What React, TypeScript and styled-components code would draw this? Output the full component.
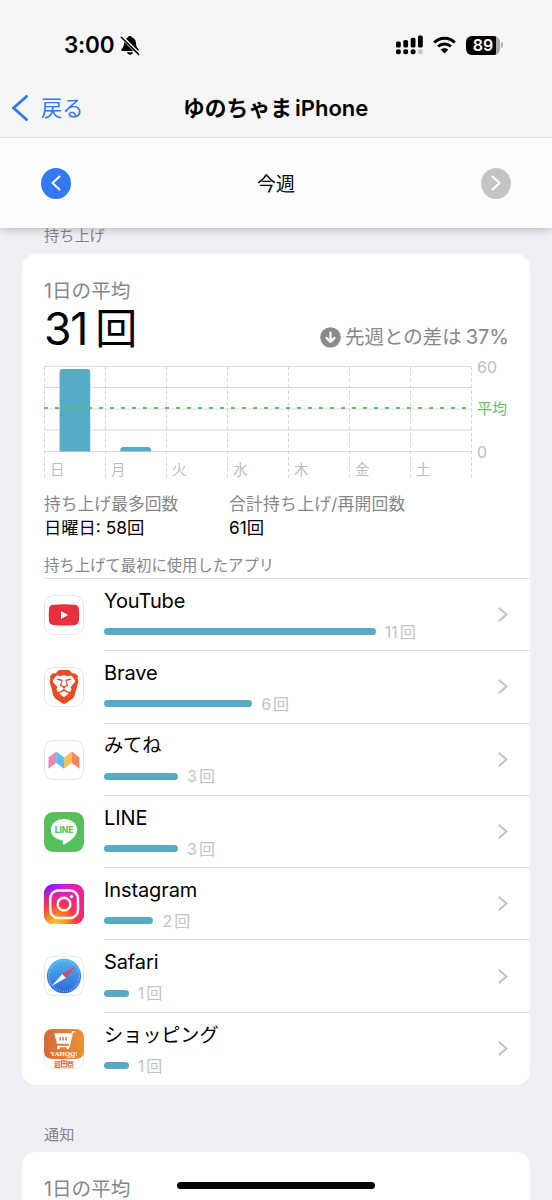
import React from 'react';
import styled, { createGlobalStyle } from 'styled-components';
import { SiBrave } from 'react-icons/si';

const FONT = "Inter, 'Noto Sans CJK JP', sans-serif";
const TEAL = '#58abc4';
const DAY_W = 61;

const Global = createGlobalStyle`
  *, *::before, *::after { box-sizing: border-box; }
  html, body { margin: 0; padding: 0; overflow: hidden; background: #f0eff5; }
  body { font-family: ${FONT}; color: #000; font-weight: 400; -webkit-font-smoothing: antialiased; }
`;

const Screen = styled.div`
  width: 552px;
  height: 1200px;
  overflow: hidden;
  position: relative;
  background: #f0eff5;
`;

const Header = styled.header`
  height: 138px;
  background: #f6f6f7;
  border-bottom: 1px solid #dddde0;
`;

const StatusBar = styled.div`
  height: 79px;
  padding: 11px 49px 0 64px;
  display: flex;
  align-items: center;
`;

const Clock = styled.span`
  font-size: 22.5px;
  font-weight: 600;
  line-height: 28px;
  letter-spacing: -0.2px;
  width: 56px;
  white-space: nowrap;
`;

const StatusIcons = styled.div`
  margin-left: auto;
  display: flex;
  align-items: center;
  gap: 10px;
`;

const Battery = styled.div`
  width: 37px;
  height: 20px;
  display: flex;
  align-items: center;
`;

const BatteryBody = styled.div`
  width: 34px;
  height: 19px;
  border-radius: 6px;
  background: linear-gradient(90deg, #000 30px, #a9a9ab 30px);
  color: #fff;
  font-size: 16px;
  font-weight: 600;
  line-height: 19px;
  text-align: center;
`;

const BatteryTip = styled.div`
  width: 2px;
  height: 6px;
  margin-left: 1px;
  border-radius: 0 2px 2px 0;
  background: #b4b4b6;
`;

const NavBar = styled.nav`
  height: 58px;
  display: grid;
  grid-template-columns: 183px 186px 1fr;
  align-items: center;
`;

const Back = styled.a`
  display: flex;
  align-items: center;
  gap: 13px;
  padding-left: 12px;
  color: #3478f6;
  font-size: 21.2px;
  line-height: 28px;
`;

const Title = styled.h1`
  margin: 0;
  font-size: 22px;
  font-weight: 600;
  line-height: 28px;
  white-space: nowrap;
  display: flex;
  gap: 3px;
`;

const Kana = styled.span<{ $size: number; $track?: number }>`
  font-size: ${p => p.$size}px;
  letter-spacing: ${p => p.$track ?? 0}px;
`;

const WeekBar = styled.div`
  height: 90px;
  padding: 0 41px;
  display: flex;
  align-items: center;
  justify-content: space-between;
  background: #fdfdfe;
  position: relative;
  z-index: 1;
  box-shadow: 0 1px 9px rgba(0, 0, 0, 0.25);
  clip-path: inset(0 0 -16px 0);
`;

const WeekButton = styled.button<{ $muted?: boolean }>`
  width: 30px;
  height: 31px;
  padding: 0;
  border: 0;
  border-radius: 50%;
  display: grid;
  place-items: center;
  background: ${p => (p.$muted ? '#c4c4c6' : '#3478f6')};
`;

const WeekLabel = styled.span`
  padding-top: 4px;
  font-size: 19px;
  line-height: 28px;
`;

const SectionLabel = styled.h2<{ $top: number; $bottom: number }>`
  margin: 0;
  padding: ${p => p.$top}px 44px ${p => p.$bottom}px;
  font-size: 15.2px;
  font-weight: 400;
  line-height: 20px;
  color: #85858a;
`;

const ScrollArea = styled.main`
  margin-top: -2px;
`;

const Card = styled.section<{ $height: number }>`
  margin: 0 22px;
  height: ${p => p.$height}px;
  border-radius: 14px;
  background: #fff;
  overflow: hidden;
`;

const Caption = styled.div`
  padding: 24px 0 0 22px;
  font-size: 19.6px;
  line-height: 26px;
  color: #87878b;
`;

const Summary = styled.div`
  height: 58px;
  padding: 0 21px 0 22px;
  display: flex;
  justify-content: space-between;
`;

const BigValue = styled.div`
  display: flex;
  gap: 8px;
  font-size: 44.5px;
  line-height: 50px;
  letter-spacing: -1.2px;
`;

const Trend = styled.div`
  display: flex;
  align-items: center;
  gap: 4px;
  height: 28px;
  margin-top: 19px;
  font-size: 20px;
  line-height: 28px;
  color: #87878b;
`;

const ChartSvg = styled.svg`
  display: block;
  margin-left: 22px;
  overflow: visible;
`;

const Stats = styled.dl`
  margin: 0;
  padding: 11px 0 0 22px;
  height: 72px;
  display: grid;
  grid-template-columns: 185px 1fr;
  grid-template-rows: 24px 24px;
`;

const StatName = styled.dt<{ $track?: number }>`
  grid-row: 1;
  font-size: 16.8px;
  line-height: 24px;
  letter-spacing: ${p => p.$track ?? 0}px;
  color: #87878b;
  white-space: nowrap;
`;

const StatValue = styled.dd`
  grid-row: 2;
  margin: 0;
  font-size: 17.3px;
  line-height: 24px;
  white-space: nowrap;
`;

const ListLabel = styled.div`
  margin-left: 22px;
  height: 26px;
  padding-top: 3px;
  font-size: 15.35px;
  line-height: 20px;
  color: #87878b;
  border-bottom: 1px solid #e1e1e4;
`;

const AppList = styled.ul`
  margin: 0;
  padding: 0 0 0 22px;
  list-style: none;
`;

const AppRow = styled.li`
  height: 72.3px;
  display: grid;
  grid-template-columns: 60px 1fr;
`;

const IconCell = styled.div`
  padding-top: 16px;
`;

const RowBody = styled.div`
  display: flex;
  align-items: center;
  justify-content: space-between;
  padding-right: 22px;
  border-bottom: 1px solid #e1e1e4;
  ${AppRow}:last-child & { border-bottom: 0; }
`;

const AppName = styled.div<{ $kana?: boolean }>`
  font-size: ${p => (p.$kana ? 19.2 : 20)}px;
  line-height: 26px;
  height: 34px;
  letter-spacing: -0.1px;
`;

const Usage = styled.div`
  display: flex;
  align-items: center;
  gap: 9px;
  height: 20px;
  font-size: 16px;
  line-height: 20px;
  color: #c3c3c6;
`;

const UsageBar = styled.div`
  height: 7px;
  border-radius: 4px;
  background: ${TEAL};
`;

const Count = styled.span`
  display: flex;
  gap: 2px;
`;

const HomeIndicator = styled.div`
  position: absolute;
  left: 177px;
  top: 1182px;
  width: 198px;
  height: 7px;
  border-radius: 4px;
  background: #000;
`;

const Chevron = ({ w, h, color, stroke, left }: { w: number; h: number; color: string; stroke: number; left?: boolean }) => (
  <svg width={w} height={h} viewBox={`0 0 ${w} ${h}`} fill="none" stroke={color} strokeWidth={stroke} strokeLinecap="round" strokeLinejoin="round">
    <path d={left ? `M${w - 1.5} 1.5L1.5 ${h / 2}L${w - 1.5} ${h - 1.5}` : `M1.5 1.5L${w - 1.5} ${h / 2}L1.5 ${h - 1.5}`} />
  </svg>
);

const BellOff = () => (
  <svg width="20" height="21" viewBox="0 0 20 21">
    <path d="M10 1C8.700 1 8 1.700 7.800 2.600C5.200 3.500 4.100 5.700 4 8.500C3.900 11.400 3.100 12.500 1.600 14C.8 14.900 1.200 16 2.300 16H17.700C18.800 16 19.200 14.900 18.400 14C16.900 12.500 16.100 11.400 16 8.500C15.900 5.700 14.800 3.500 12.200 2.600C12 1.700 11.300 1 10 1Z" />
    <path d="M7 17.300H13C12.700 18.900 11.500 19.700 10 19.700S7.300 18.900 7 17.300Z" />
    <path d="M1.600 1.800L19 19.200" stroke="#f6f6f7" strokeWidth="3.600" />
    <path d="M1.300 2.300L18.600 19.400" stroke="#000" strokeWidth="1.500" strokeLinecap="round" />
  </svg>
);

const Signal = () => (
  <svg width="27" height="20" viewBox="0 0 27 20">
    <rect x="0" y="6.500" width="4.800" height="6" rx="1.600" />
    <rect x="7.300" y="5" width="4.800" height="7.500" rx="1.600" />
    <rect x="14.700" y="2.800" width="4.800" height="9.700" rx="1.600" />
    <rect x="22" y="0.500" width="4.800" height="12" rx="1.600" />
    <rect x="0" y="14.300" width="4.800" height="5" rx="1.800" />
    <rect x="7.300" y="14.300" width="4.800" height="5" rx="1.800" />
    <rect x="14.700" y="14.300" width="4.800" height="5" rx="1.800" />
    <rect x="22" y="14.300" width="4.800" height="5" rx="1.800" fill="#c6c6c8" />
  </svg>
);

const Wifi = () => (
  <svg width="23" height="18" viewBox="0.500 0 23 18">
    <path d="M1.700 6.500C7.500 .8 16.500 .8 22.300 6.500" fill="none" stroke="#000" strokeWidth="3" />
    <path d="M5.600 10.500C9.200 7 14.800 7 18.400 10.500" fill="none" stroke="#000" strokeWidth="3" />
    <path d="M12 17.500L8.200 13.600C10.300 11.800 13.700 11.800 15.800 13.600Z" />
  </svg>
);

const DownBadge = () => (
  <svg width="21" height="21" viewBox="0 0 21 21">
    <circle cx="10.500" cy="10.500" r="10.300" fill="#8a8a8e" />
    <path d="M10.500 5.500V14.500M6.500 10.900L10.500 14.900L14.500 10.900" fill="none" stroke="#fff" strokeWidth="2.200" strokeLinecap="round" strokeLinejoin="round" />
  </svg>
);

const Tile = ({ children }: { children: React.ReactNode }) => (
  <svg width="40" height="40" viewBox="0 0 40 40">
    <rect x="0.500" y="0.500" width="39" height="39" rx="8.800" fill="#fff" stroke="#e9e6e8" />
    {children}
  </svg>
);

const YouTubeIcon = () => (
  <Tile>
    <path d="M9 9.800Q20 8.800 31 9.800Q34.600 10.200 34.900 14Q35.400 20 34.900 26Q34.600 29.600 31 30Q20 31 9 30Q5.300 29.600 5 26Q4.500 20 5 14Q5.300 10.200 9 9.800Z" fill="#e8303c" />
    <path d="M17 16L24.200 20L17 24Z" fill="#fff" />
  </Tile>
);

const BraveIcon = () => (
  <Tile>
    <SiBrave x={3} y={3} size={34} color="#ea4b27" />
  </Tile>
);

const MiteneIcon = () => (
  <Tile>
    <path d="M4.500 17.500L12.200 11.500V23L4.500 28.700Z" fill="#e58bb0" />
    <path d="M12.200 11.500L20 17.500V28.700L12.200 23Z" fill="#5ebdf0" />
    <path d="M20 17.500L27.800 11.500V23L20 28.700Z" fill="#f3c25c" />
    <path d="M27.800 11.500L35.500 17.500V28.700L27.800 23Z" fill="#ee8759" />
  </Tile>
);

const LineIcon = () => (
  <svg width="40" height="40" viewBox="0 0 40 40">
    <rect width="40" height="40" rx="9" fill="#57c05d" />
    <path d="M20 7C12.700 7 6.900 11.700 6.900 17.700C6.900 23 11.600 27.300 17.700 28.200C19.200 28.500 19 29.500 18.700 31.800C18.700 32.800 19.500 32.700 20.300 32.200C24.500 29.700 33.200 24.700 33.200 17.700C33.200 11.700 27.300 7 20 7Z" fill="#fff" />
    <text x="10.700" y="21.200" textLength="18.600" lengthAdjust="spacingAndGlyphs" fontFamily="Inter, sans-serif" fontSize="8.700" fontWeight="800" fill="#57c05d">LINE</text>
  </svg>
);

const InstagramIcon = () => (
  <svg width="40" height="40" viewBox="0 0 40 40">
    <defs>
      <linearGradient id="igBase" x1="0" y1="0" x2="1" y2="0.600">
        <stop offset="0" stopColor="#6a1df5" />
        <stop offset="0.350" stopColor="#c41fd8" />
        <stop offset="0.700" stopColor="#f01fa0" />
        <stop offset="1" stopColor="#f5237c" />
      </linearGradient>
      <radialGradient id="igGlow" cx="0.300" cy="1.050" r="0.950">
        <stop offset="0" stopColor="#ffd53a" />
        <stop offset="0.250" stopColor="#ff9a22" />
        <stop offset="0.550" stopColor="#fb3a3c" />
        <stop offset="0.800" stopColor="#f5287c" stopOpacity="0.600" />
        <stop offset="1" stopColor="#e01fb5" stopOpacity="0" />
      </radialGradient>
    </defs>
    <rect width="40" height="40" rx="9" fill="url(#igBase)" />
    <rect width="40" height="40" rx="9" fill="url(#igGlow)" />
    <rect x="6.200" y="6.500" width="27.800" height="27.500" rx="8" fill="none" stroke="#fff" strokeWidth="2.500" />
    <circle cx="20" cy="20.200" r="6.400" fill="none" stroke="#fff" strokeWidth="2.500" />
    <circle cx="27.600" cy="12.600" r="1.700" fill="#fff" />
  </svg>
);

const SafariIcon = () => (
  <Tile>
    <defs>
      <linearGradient id="sfBlue" x1="0" y1="0" x2="0" y2="1">
        <stop offset="0" stopColor="#50b4ee" />
        <stop offset="1" stopColor="#2f68d8" />
      </linearGradient>
    </defs>
    <circle cx="20" cy="20" r="17.200" fill="url(#sfBlue)" />
    <circle cx="20" cy="20" r="15.200" fill="none" stroke="#a9d6f7" strokeWidth="1.500" strokeDasharray="0.500 1.490" />
    <path d="M32.200 10L18.300 18.100L21.700 22Z" fill="#e4484a" />
    <path d="M7.700 30L18.300 18.100L21.700 22Z" fill="#fff" />
  </Tile>
);

const ShoppingIcon = () => (
  <Tile>
    <defs>
      <linearGradient id="shopOrange" x1="0" y1="0" x2="1" y2="0">
        <stop offset="0" stopColor="#d96a35" />
        <stop offset="1" stopColor="#e8913a" />
      </linearGradient>
    </defs>
    <path d="M9 0H31Q40 0 40 9V22Q40 30 31 30H9Q0 30 0 22V9Q0 0 9 0Z" fill="url(#shopOrange)" />
    <path d="M10.500 5L13 14.800H25.200L27.600 5Z" fill="#fff" />
    <path d="M10.500 5H27.200M31 2.800H28.500L25.200 17.500H13.500" fill="none" stroke="#fff" strokeWidth="1.300" />
    <circle cx="14.500" cy="18.900" r="1.300" fill="#fff" />
    <circle cx="23.800" cy="18.900" r="1.300" fill="#fff" />
    <path d="M16.200 8V11.500M19.200 8V11.500M22.200 8V11.500" stroke="#df7a37" strokeWidth="1.500" />
    <text x="6.500" y="26.700" textLength="27" lengthAdjust="spacingAndGlyphs" fontFamily="'Liberation Serif', serif" fontSize="7" fontWeight="700" fill="#fff">YAHOO!</text>
    <text x="22.500" y="29" fontFamily="Inter, sans-serif" fontSize="2.500" fontWeight="600" fill="#fff">JAPAN</text>
    <text x="10.300" y="37.500" fontFamily="'Noto Sans CJK JP', sans-serif" fontSize="6.600" fontWeight="900" fill="#e2743a">超</text>
    <path d="M17.500 31.800H22.800V37.800H17.500ZM17.500 34.500H22.800M20.100 31.800V36" fill="none" stroke="#e2743a" strokeWidth="1.200" />
    <text x="23.300" y="37.500" fontFamily="'Noto Sans CJK JP', sans-serif" fontSize="6.600" fontWeight="900" fill="#e2743a">祭</text>
  </Tile>
);

const DAYS = ['日', '月', '火', '水', '木', '金', '土'];

const Chart = () => (
  <ChartSvg width="486" height="119" viewBox="0 0 486 119" fontFamily={FONT}>
    {[4.5, 25.5, 47, 68, 89.5].map(y => (
      <line key={y} x1="0" x2="427" y1={y} y2={y} stroke="#dcdce0" strokeWidth="1" />
    ))}
    {[0, 1, 2, 3, 4, 5, 6, 7].map(i => (
      <line key={i} x1={i * DAY_W + 0.5} x2={i * DAY_W + 0.5} y1="4.500" y2="117" stroke="#d5d5da" strokeDasharray="3.500 2.500" />
    ))}
    <path d="M15.600 89.500V10Q15.600 7 18.600 7H43.200Q46.200 7 46.200 10V89.500Z" fill={TEAL} />
    <path d="M76.300 89.500V88Q76.300 85 79.300 85H104Q107 85 107 88V89.500Z" fill={TEAL} />
    <line x1="0" x2="423" y1="46" y2="46" stroke="#62c466" strokeWidth="2.200" strokeDasharray="4 7" />
    {DAYS.map((d, i) => (
      <text key={d} x={i * DAY_W + 6} y="113" fontSize="14.500" fill="#bdbdc1">{d}</text>
    ))}
    <text x="433" y="10.500" fontSize="16" fill="#bdbdc1">60</text>
    <text x="433" y="51.500" fontSize="15" fill="#62c466">平均</text>
    <text x="433" y="95.500" fontSize="16" fill="#bdbdc1">0</text>
  </ChartSvg>
);

const APPS = [
  { name: 'YouTube', count: 11, icon: YouTubeIcon },
  { name: 'Brave', count: 6, icon: BraveIcon },
  { name: 'みてね', count: 3, icon: MiteneIcon, kana: true },
  { name: 'LINE', count: 3, icon: LineIcon },
  { name: 'Instagram', count: 2, icon: InstagramIcon },
  { name: 'Safari', count: 1, icon: SafariIcon },
  { name: 'ショッピング', count: 1, icon: ShoppingIcon, kana: true },
];

export default function App() {
  return (
    <Screen>
      <Global />
      <Header>
        <StatusBar>
          <Clock>3:00</Clock>
          <BellOff />
          <StatusIcons>
            <Signal />
            <Wifi />
            <Battery>
              <BatteryBody>89</BatteryBody>
              <BatteryTip />
            </Battery>
          </StatusIcons>
        </StatusBar>
        <NavBar>
          <Back>
            <Chevron w={16} h={26} color="#3478f6" stroke={3} left />
            戻る
          </Back>
          <Title>
            <Kana $size={21.8}>ゆのちゃま</Kana>
            <span>iPhone</span>
          </Title>
        </NavBar>
      </Header>
      <WeekBar>
        <WeekButton><Chevron w={10} h={16} color="#fff" stroke={2} left /></WeekButton>
        <WeekLabel>今週</WeekLabel>
        <WeekButton $muted><Chevron w={10} h={16} color="#fff" stroke={2} /></WeekButton>
      </WeekBar>
      <ScrollArea>
        <SectionLabel $top={0} $bottom={8}>持ち上げ</SectionLabel>
        <Card $height={831}>
          <Caption>1日の平均</Caption>
          <Summary>
            <BigValue>31<Kana $size={42}>回</Kana></BigValue>
            <Trend>
              <DownBadge />
              <Kana $size={19.5}>先週との差は</Kana>
              <span>37%</span>
            </Trend>
          </Summary>
          <Chart />
          <Stats>
            <StatName>持ち上げ最多回数</StatName>
            <StatName $track={0.25}>合計持ち上げ/再開回数</StatName>
            <StatValue>日曜日: 58回</StatValue>
            <StatValue>61回</StatValue>
          </Stats>
          <ListLabel>持ち上げて最初に使用したアプリ</ListLabel>
          <AppList>
            {APPS.map(({ name, count, icon: Icon, kana }) => (
              <AppRow key={name}>
                <IconCell><Icon /></IconCell>
                <RowBody>
                  <div>
                    <AppName $kana={kana}>{name}</AppName>
                    <Usage>
                      <UsageBar style={{ width: count * 24.7 }} />
                      <Count>{count}<span>回</span></Count>
                    </Usage>
                  </div>
                  <Chevron w={10} h={15} color="#c3c3c6" stroke={2.2} />
                </RowBody>
              </AppRow>
            ))}
          </AppList>
        </Card>
        <SectionLabel $top={40} $bottom={7}>通知</SectionLabel>
        <Card $height={120}>
          <Caption>1日の平均</Caption>
        </Card>
      </ScrollArea>
      <HomeIndicator />
    </Screen>
  );
}
